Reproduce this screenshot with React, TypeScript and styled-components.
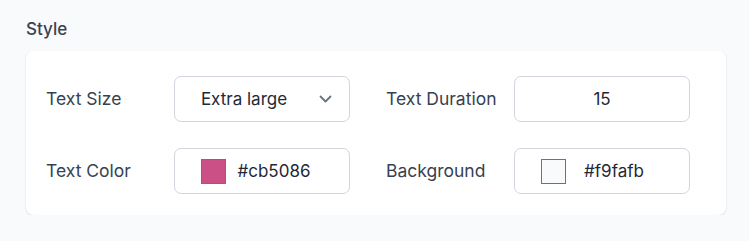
import styled, { createGlobalStyle } from "styled-components";

const GlobalStyle = createGlobalStyle`
  body {
    margin: 0;
    background: #f9fafb;
    font-family: "Inter", "Liberation Sans", sans-serif;
  }
`;

const Page = styled.div`
  padding: 17px 23px 0 26px;
`;

const Heading = styled.h3`
  margin: 0 0 9px;

  font-size: 17px;
  font-weight: 500;
  line-height: 25px;
  color: #3b4352;
`;

const Card = styled.div`
  width: 700px;
  box-sizing: border-box;

  padding: 25px 36px 21px 20px;

  background: #ffffff;
  border-radius: 8px;
  box-shadow: 0 1px 3px rgba(0, 0, 0, 0.08), 0 1px 2px rgba(0, 0, 0, 0.04);

  display: grid;
  grid-template-columns: 304px 304px;
  column-gap: 36px;
  row-gap: 26px;
`;

const Field = styled.div`
  display: grid;
  grid-template-columns: 128px 176px;
  align-items: center;
`;

const Label = styled.span`
  font-size: 17.5px;
  color: #374151;
  margin-top: -2px;
`;

const Box = styled.div<{ $center?: boolean }>`
  height: 46px;
  box-sizing: border-box;

  border: 1px solid #d4d4de;
  border-radius: 7px;
  background: #ffffff;

  display: flex;
  align-items: center;
  justify-content: ${(p) => (p.$center ? "center" : "flex-start")};

  font-size: 17px;
  color: #1f2937;
`;

const SelectBox = styled(Box)`
  padding: 0 17px 0 0;
  gap: 6px;
`;

const SelectValue = styled.span`
  flex: 1;
  text-align: center;
`;

const ColorBox = styled(Box)`
  padding: 0 27px 0 26px;
`;

const Swatch = styled.span<{ $color: string }>`
  width: 25px;
  height: 25px;
  box-sizing: border-box;

  background: ${(p) => p.$color};
  border: 1px solid #6b7280;
`;

const ColorValue = styled.span`
  flex: 1;
  text-align: center;
`;

const Chevron = () => (
  <svg width="13" height="8" viewBox="0 0 13 8" fill="none">
    <path
      d="M1.5 1.5L6.5 6.5L11.5 1.5"
      stroke="#6b7280"
      strokeWidth="1.8"
      strokeLinecap="round"
      strokeLinejoin="round"
    />
  </svg>
);

const App = () => {
  return (
    <Page>
      <GlobalStyle />
      <Heading>Style</Heading>

      <Card>
        <Field>
          <Label>Text Size</Label>
          <SelectBox>
            <SelectValue>Extra large</SelectValue>
            <Chevron />
          </SelectBox>
        </Field>

        <Field>
          <Label>Text Duration</Label>
          <Box $center>15</Box>
        </Field>

        <Field>
          <Label>Text Color</Label>
          <ColorBox>
            <Swatch $color="#cb5086" />
            <ColorValue>#cb5086</ColorValue>
          </ColorBox>
        </Field>

        <Field>
          <Label>Background</Label>
          <ColorBox>
            <Swatch $color="#f9fafb" />
            <ColorValue>#f9fafb</ColorValue>
          </ColorBox>
        </Field>
      </Card>
    </Page>
  );
};

export default App;
